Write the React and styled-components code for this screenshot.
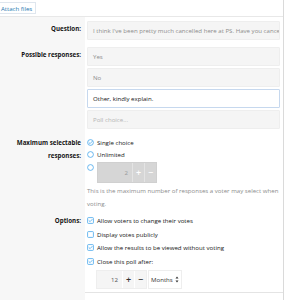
import React from "react";
import styled, { createGlobalStyle } from "styled-components";

const Global = createGlobalStyle`
  html, body { margin: 0; padding: 0; background: #fff; }
  body { font-family: "Open Sans", "Noto Sans", sans-serif; font-size: 6.1px; color: #141414; }
  * { box-sizing: border-box; }
`;

const Page = styled.div`
  width: 307px;
  height: 300px;
  overflow: hidden;
`;

const Panel = styled.div`
  width: 284px;
  border-right: 1px solid #dadada;
`;

const TopBar = styled.div`
  height: 17px;
  padding-top: 2px;
  border-bottom: 1px solid #e8e8e8;
`;

const AttachButton = styled.span`
  display: inline-flex;
  align-items: center;
  height: 12px;
  margin-left: -4px;
  padding: 0 3px 0 4px;
  border: 1px solid #dfe6ee;
  color: #2577b1;
  font-size: 6.1px;
  background: #fff;
`;

const Row = styled.div`
  display: grid;
  grid-template-columns: 85px minmax(0, 1fr);
`;

const Label = styled.div`
  background: #f7f7f7;
  text-align: right;
  font-weight: 700;
  font-size: 6.2px;
  padding: ${(p) => p.$pt || 0}px 4px 0 0;
  line-height: 12.5px;
  color: #141414;
  white-space: nowrap;
`;

const Content = styled.div`
  min-width: 0;
  padding: ${(p) => p.$pt || 0}px 3px ${(p) => p.$pb || 0}px 2px;
  border-top: ${(p) => (p.$sep ? "1px solid #e4e4e4" : "none")};
  display: flex;
  flex-direction: column;
  gap: ${(p) => p.$gap || 0}px;
`;

const Input = styled.div`
  height: 19px;
  display: flex;
  align-items: center;
  padding: 0 5px;
  white-space: nowrap;
  overflow: hidden;
  background: ${(p) => (p.$focus ? "#fff" : "#f5f5f5")};
  border: 1px solid ${(p) => (p.$focus ? "#c6d8ee" : "#eeeeee")};
  color: ${(p) => (p.$focus ? "#141414" : p.$ph ? "#b4b4b4" : "#8c8c8c")};
  border-radius: 1px;
`;

const Choice = styled.div`
  display: flex;
  align-items: ${(p) => (p.$top ? "flex-start" : "center")};
  gap: 3px;
  height: ${(p) => p.$h || 12.5}px;
  color: #141414;
  white-space: nowrap;
`;

const IconWrap = styled.span`
  display: flex;
  padding-top: ${(p) => p.$pt || 0}px;
`;

const Hint = styled.div`
  color: #8c8c8c;
  line-height: 13px;
`;

const Spinner = styled.div`
  display: flex;
  align-items: stretch;
  height: ${(p) => p.$h}px;
  margin: ${(p) => p.$mt || 0}px 0 0 ${(p) => p.$ml || 0}px;
  gap: 1px;
`;

const SpinBox = styled.div`
  display: flex;
  align-items: stretch;
  width: ${(p) => p.$w}px;
  background: ${(p) => (p.$disabled ? "#d6d6d6" : "#f5f5f5")};
  border: 1px solid ${(p) => (p.$disabled ? "#d0d0d0" : "#eeeeee")};
  color: ${(p) => (p.$disabled ? "#999" : "#505050")};
`;

const SpinValue = styled.div`
  flex: 1;
  display: flex;
  align-items: center;
  justify-content: flex-end;
  padding-right: 4px;
`;

const SpinBtn = styled.div`
  width: 12px;
  display: flex;
  align-items: center;
  justify-content: center;
  border-left: 1px solid ${(p) => (p.$disabled ? "#e4e4e4" : "#fff")};
  font-size: 9px;
  font-weight: 600;
  color: ${(p) => (p.$disabled ? "#fff" : "#333")};
`;

const Select = styled.div`
  display: flex;
  align-items: center;
  gap: 2px;
  padding: 0 2px 0 2px;
  border: 1px solid #eeeeee;
  background: #fff;
  color: #333;
`;

const Icon = ({ kind, checked }) => (
  <svg width="7" height="7" viewBox="0 0 14 14" style={{ flex: "none" }}>
    {kind === "radio" ? (
      <circle cx="7" cy="7" r="5.8" fill="none" stroke="#47a7eb" strokeWidth="1.6" />
    ) : (
      <rect x="1.2" y="1.2" width="11.6" height="11.6" rx="1.5" fill="none" stroke="#47a7eb" strokeWidth="1.6" />
    )}
    {checked && (
      <path d="M4 7.2 L6.2 9.3 L10.2 4.9" fill="none" stroke="#47a7eb" strokeWidth="1.6" strokeLinecap="round" strokeLinejoin="round" />
    )}
  </svg>
);

const SortIcon = () => (
  <svg width="4" height="7" viewBox="0 0 8 14">
    <path d="M4 1 L7 5 H1 Z M4 13 L7 9 H1 Z" fill="#333" />
  </svg>
);

export default function App() {
  return (
    <Page>
      <Global />
      <Panel>
        <TopBar>
          <AttachButton>Attach files</AttachButton>
        </TopBar>
        <Row>
          <Label $pt={6}>Question:</Label>
          <Content $pt={4}>
            <Input>I think I've been pretty much cancelled here at PS. Have you cancelled yet?</Input>
          </Content>
        </Row>
        <Row>
          <Label $pt={9}>Possible responses:</Label>
          <Content $pt={7} $gap={2}>
            <Input>Yes</Input>
            <Input>No</Input>
            <Input $focus>Other, kindly explain.</Input>
            <Input $ph>Poll choice...</Input>
          </Content>
        </Row>
        <Row>
          <Label $pt={8}>
            Maximum selectable
            <br />
            responses:
          </Label>
          <Content $pt={7}>
            <Choice>
              <Icon kind="radio" checked />
              Single choice
            </Choice>
            <Choice>
              <Icon kind="radio" />
              Unlimited
            </Choice>
            <Choice $h={23} $top>
              <IconWrap $pt={3}>
                <Icon kind="radio" />
              </IconWrap>
              <Spinner $h={21} $mt={1}>
                <SpinBox $w={60} $disabled>
                  <SpinValue>2</SpinValue>
                  <SpinBtn $disabled>+</SpinBtn>
                  <SpinBtn $disabled>−</SpinBtn>
                </SpinBox>
              </Spinner>
            </Choice>
            <Hint>This is the maximum number of responses a voter may select when voting.</Hint>
          </Content>
        </Row>
        <Row>
          <Label $pt={5}>Options:</Label>
          <Content $pt={4} $pb={3}>
            <Choice $h={13.6}>
              <Icon kind="box" checked />
              Allow voters to change their votes
            </Choice>
            <Choice $h={13.6}>
              <Icon kind="box" />
              Display votes publicly
            </Choice>
            <Choice $h={13.6}>
              <Icon kind="box" checked />
              Allow the results to be viewed without voting
            </Choice>
            <Choice $h={13.6}>
              <Icon kind="box" checked />
              Close this poll after:
            </Choice>
            <Spinner $h={19} $mt={1.5} $ml={9}>
              <SpinBox $w={51}>
                <SpinValue>12</SpinValue>
                <SpinBtn>+</SpinBtn>
                <SpinBtn>−</SpinBtn>
              </SpinBox>
              <Select>
                Months <SortIcon />
              </Select>
            </Spinner>
          </Content>
        </Row>
        <Row>
          <Label $pt={5}>Schedule:</Label>
          <Content $pt={5} $sep>
            <Choice>
              <Icon kind="box" />
              Watch this thread...
            </Choice>
          </Content>
        </Row>
      </Panel>
    </Page>
  );
}
